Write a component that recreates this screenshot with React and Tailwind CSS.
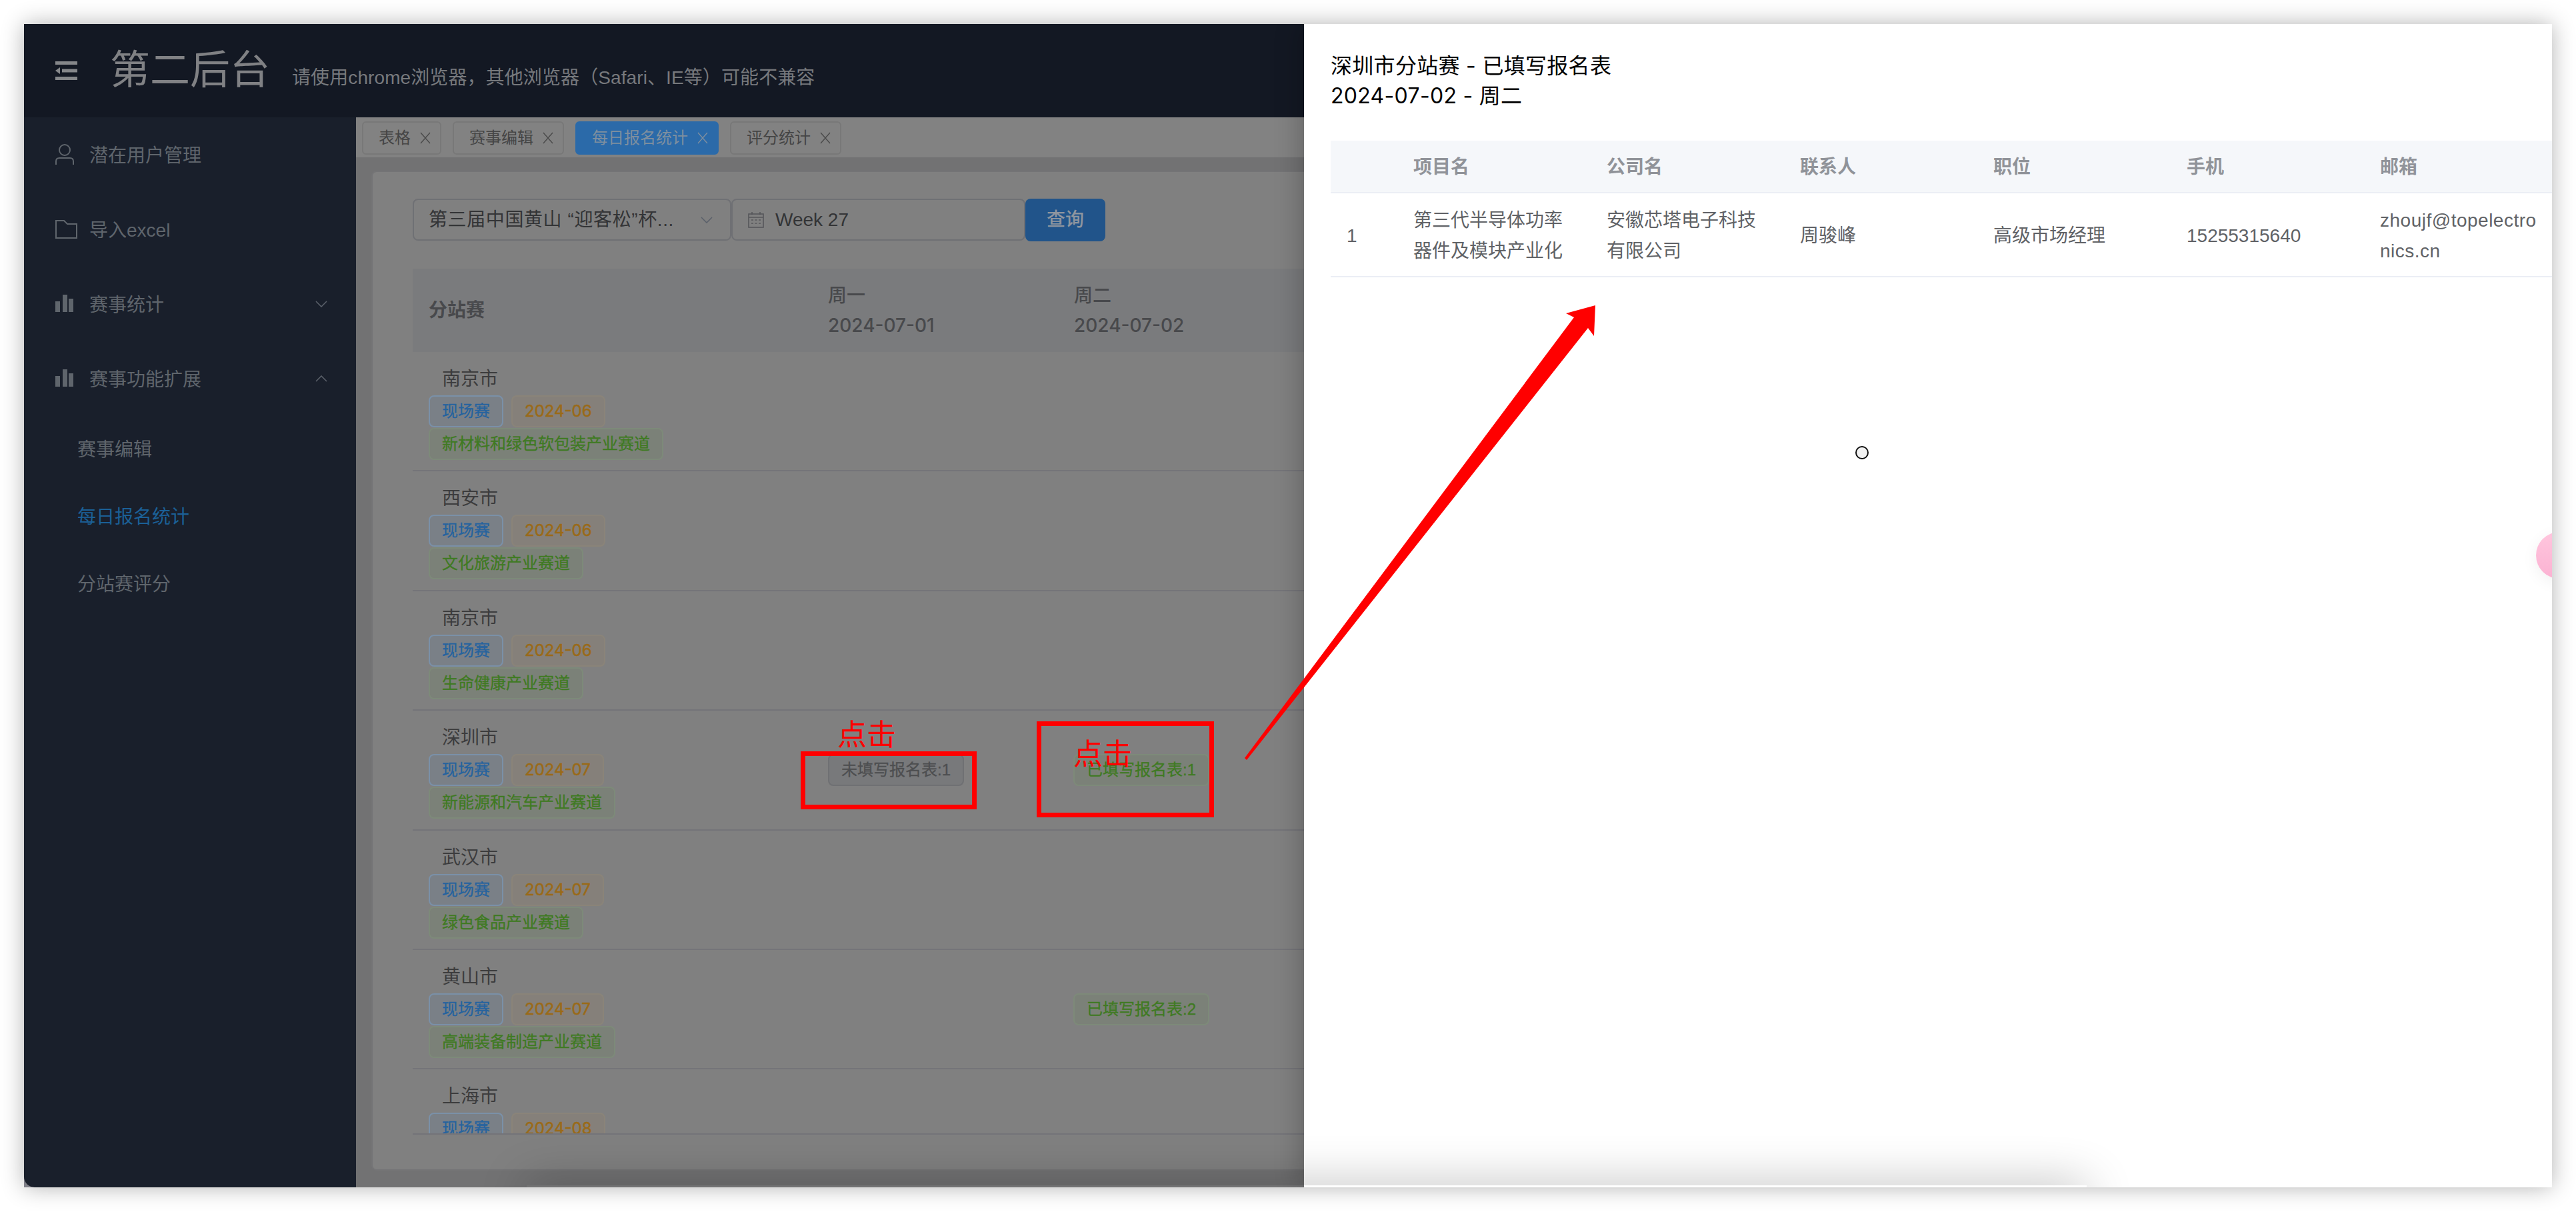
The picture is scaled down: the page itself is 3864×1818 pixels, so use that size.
const FONT = "[font-family:'Liberation_Sans','Noto_Sans_CJK_SC',sans-serif]";
const NUM = "[font-family:'Inter','Noto_Sans_CJK_SC',sans-serif]";

const Chevron = ({ up }) => (
  <svg width="18" height="10" viewBox="0 0 18 10" fill="none" stroke="#5a606a" strokeWidth="1.6" className="ml-auto">
    <path d={up ? "M1 9 L9 1 L17 9" : "M1 1 L9 9 L17 1"} />
  </svg>
);

const Bars = () => (
  <svg width="28" height="28" viewBox="0 0 28 28" fill="#5f656c">
    <rect x="0" y="10" width="7" height="16" />
    <rect x="11" y="0" width="7" height="26" />
    <rect x="20" y="6" width="7" height="20" />
  </svg>
);

const UserIcon = () => (
  <svg width="28" height="32" viewBox="0 0 28 32" fill="none" stroke="#5f656c" strokeWidth="2">
    <circle cx="14" cy="9" r="8" />
    <path d="M1 31 V26 Q1 21 6 21 H22 Q27 21 27 26 V31" />
  </svg>
);

const FolderIcon = () => (
  <svg width="33" height="28" viewBox="0 0 33 28" fill="none" stroke="#5f656c" strokeWidth="2">
    <path d="M1 1 H13 L18 6 H32 V27 H1 Z" />
  </svg>
);

const FoldIcon = () => (
  <svg width="33" height="28" viewBox="0 0 33 28" fill="#85878a">
    <rect x="0" y="0" width="33" height="5" />
    <rect x="10" y="11.5" width="23" height="5" />
    <rect x="0" y="23" width="33" height="5" />
    <path d="M0 14 L7 9 V19 Z" />
  </svg>
);

const CalendarIcon = () => (
  <svg width="24" height="24" viewBox="0 0 24 24" fill="none" stroke="#55565a" strokeWidth="1.6">
    <rect x="1" y="3" width="22" height="20" />
    <path d="M1 8 H23 M6 0 V4 M18 0 V4" />
    <path d="M5 12 H8 M10.5 12 H13.5 M16 12 H19 M5 17 H8 M10.5 17 H13.5 M16 17 H19" />
  </svg>
);

const Close = ({ color = "#4a4a4a" }) => (
  <svg width="16" height="18" viewBox="0 0 16 18" fill="none" stroke={color} strokeWidth="1.4">
    <path d="M1 1 L15 17 M15 1 L1 17" />
  </svg>
);

const Tag = ({ kind, children, num }) => {
  const styles = {
    blue: "bg-[#7a8087] border-[#7a90a8] text-[#25639f]",
    orange: "bg-[#85807a] border-[#8a8479] text-[#9a6a18]",
    green: "bg-[#7b8178] border-[#7d8a79] text-[#3f7a22]",
    gray: "bg-[#78797b] border-[#6f7073] text-[#4d4e50]",
  };
  return (
    <span className={`inline-flex items-center h-[48px] px-[18px] border-2 rounded-[8px] text-[24px] whitespace-nowrap ${num ? "[-webkit-text-stroke:0.5px]" : "[-webkit-text-stroke:0.3px]"} ${num ? NUM : ""} ${styles[kind]}`}>
      {children}
    </span>
  );
};

const rows = [
  { city: "南京市", date: "2024-06", track: "新材料和绿色软包装产业赛道" },
  { city: "西安市", date: "2024-06", track: "文化旅游产业赛道" },
  { city: "南京市", date: "2024-06", track: "生命健康产业赛道" },
  { city: "深圳市", date: "2024-07", track: "新能源和汽车产业赛道", mon: "未填写报名表:1", tue: "已填写报名表:1" },
  { city: "武汉市", date: "2024-07", track: "绿色食品产业赛道" },
  { city: "黄山市", date: "2024-07", track: "高端装备制造产业赛道", tue: "已填写报名表:2" },
  { city: "上海市", date: "2024-08", track: "" },
];

const Sidebar = () => (
  <aside className="w-[498px] shrink-0 bg-[#191f2b] rounded-bl-[16px] text-[28px] text-[#5f656c]">
    {[
      { icon: <UserIcon />, label: "潜在用户管理" },
      { icon: <FolderIcon />, label: "导入excel" },
      { icon: <Bars />, label: "赛事统计", chevron: <Chevron /> },
      { icon: <Bars />, label: "赛事功能扩展", chevron: <Chevron up /> },
    ].map((m) => (
      <div key={m.label} className="h-[112px] flex items-center pl-[47px] pr-[43px]">
        <span className="w-[51px] shrink-0 flex items-center">{m.icon}</span>
        <span className="pt-[3px]">{m.label}</span>
        {m.chevron}
      </div>
    ))}
    {[
      ["赛事编辑", ""],
      ["每日报名统计", "text-[#1b6097]"],
      ["分站赛评分", ""],
    ].map(([t, c]) => (
      <div key={t} className={`h-[101px] flex items-center pl-[80px] ${c}`}>{t}</div>
    ))}
  </aside>
);

const TabBar = () => (
  <div className="h-[60px] bg-[#828282] pl-[9px] pt-[6px] flex gap-[17px] text-[24px]">
    {[["表格", false], ["赛事编辑", false], ["每日报名统计", true], ["评分统计", false]].map(([t, active]) => (
      <div
        key={t}
        className={`h-[50px] flex items-center gap-[14px] pl-[23px] pr-[14px] border-2 rounded-[6px] ${
          active ? "bg-[#2b6aa9] border-[#2b6aa9] text-[#7f8f9f]" : "border-[#787878] text-[#454545]"
        }`}
      >
        <span>{t}</span>
        <Close color={active ? "#7f8f9f" : "#4a4a4a"} />
      </div>
    ))}
  </div>
);

const Filters = () => (
  <div className="flex h-[64px] text-[28px] text-[#333436]">
    <div className="w-[478px] h-[63px] flex items-center border-2 border-[#6f7074] rounded-[8px] pl-[22px] pr-[26px]">
      <span className="whitespace-nowrap tracking-[0.6px]">第三届中国黄山 “迎客松”杯...</span>
      <Chevron />
    </div>
    <div className="w-[441px] h-[63px] flex items-center border-2 border-[#6f7074] rounded-[8px] pl-[23px] gap-[17px]">
      <CalendarIcon />
      <span>Week 27</span>
    </div>
    <div className="w-[120px] h-[64px] flex items-center justify-center rounded-[8px] bg-[#21548a] text-[#8e959f] font-medium">
      查询
    </div>
  </div>
);

const MainTable = () => (
  <div className="mt-[41px]">
    <div className="h-[125px] bg-[#7a7b7d] flex items-center text-[28px] font-bold text-[#48494c]">
      <div className="w-[599px] pl-[24px]">分站赛</div>
      <div className={`w-[369px] pl-[24px] leading-[45px] font-medium ${NUM}`}>
        <div>周一</div>
        <div>2024-07-01</div>
      </div>
      <div className={`w-[369px] pl-[24px] leading-[45px] font-medium ${NUM}`}>
        <div>周二</div>
        <div>2024-07-02</div>
      </div>
    </div>
    <div className="h-[1174px] overflow-hidden border-b-2 border-[#747479]">
      {rows.map((r) => (
        <div key={r.city + r.track} className="h-[179.4px] shrink-0 flex border-b-2 border-[#747479]">
          <div className="w-[599px] pl-[24px] pt-[16px]">
            <div className="pl-[20px] pt-[2px] h-[46px] text-[28px] leading-[46px] text-[#3c3c3d]">{r.city}</div>
            <div className="mt-[3px] flex flex-wrap gap-x-[12px] gap-y-[1px]">
              <Tag kind="blue">现场赛</Tag>
              <Tag kind="orange" num>{r.date}</Tag>
              {r.track && <div className="w-full"><Tag kind="green">{r.track}</Tag></div>}
            </div>
          </div>
          <div className="w-[369px] pl-[24px] flex items-center">
            {r.mon && <Tag kind="gray">{r.mon}</Tag>}
          </div>
          <div className="w-[369px] pl-[23px] flex items-center">
            {r.tue && <Tag kind="green">{r.tue}</Tag>}
          </div>
        </div>
      ))}
    </div>
  </div>
);

const Main = () => (
  <main className="flex-1 min-w-0 flex flex-col bg-[#727273]">
    <TabBar />
    <div className="flex-1 pt-[20px] pl-[23px] pr-[23px] pb-[25px]">
      <div className="h-full bg-[#808080] border-2 border-[#747476] rounded-[8px] pl-[60px] pt-[40px] overflow-hidden">
        <Filters />
        <MainTable />
      </div>
    </div>
  </main>
);

const DETAIL_COLS = "grid grid-cols-[100px_290px_290px_290px_290px_290px_290px]";

const Drawer = () => (
  <section className="absolute top-0 bottom-0 right-0 w-[1872px] bg-white pl-[40px] pt-[40px] overflow-hidden shadow-[-6px_0_36px_rgba(0,0,0,0.22)] text-[28px]">
    <div className={`h-[90px] text-[32px] leading-[45px] tracking-[0.3px] text-black ${NUM}`}>
      <div>深圳市分站赛 - 已填写报名表</div>
      <div>2024-07-02 - 周二</div>
    </div>
    <div className="mt-[45px]">
      <div className={`${DETAIL_COLS} h-[79px] pt-[3px] items-center bg-[#f5f7fa] border-b-2 border-[#ebeef5] font-bold text-[#909399]`}>
        <div />
        {["项目名", "公司名", "联系人", "职位", "手机", "邮箱"].map((h) => (
          <div key={h} className="pl-[24px]">{h}</div>
        ))}
      </div>
      <div className={`${DETAIL_COLS} h-[126px] pt-[3px] items-center border-b-2 border-[#ebeef5] leading-[46px] text-[#606266]`}>
        <div className="pl-[24px]">1</div>
        <div className="pl-[24px] pr-[24px]">第三代半导体功率器件及模块产业化</div>
        <div className="pl-[24px] pr-[24px]">安徽芯塔电子科技有限公司</div>
        <div className="pl-[24px]">周骏峰</div>
        <div className="pl-[24px]">高级市场经理</div>
        <div className="pl-[24px]">15255315640</div>
        <div className="pl-[24px] whitespace-nowrap tracking-[0.5px]">zhoujf@topelectro<br />nics.cn</div>
      </div>
    </div>
    <div className="absolute left-[1848px] top-[762px] w-[70px] h-[70px] rounded-full bg-gradient-to-b from-[#ffc6de] to-[#fbb2d2] shadow-[0_6px_24px_rgba(0,0,0,0.06)]" />
  </section>
);

const Annotations = () => (
  <>
    <div className="absolute left-[1201px] top-[1127px] w-[264px] h-[87px] border-[7px] border-[#ff0000]" />
    <div className="absolute left-[1555px] top-[1082px] w-[266px] h-[144px] border-[7px] border-[#ff0000]" />
    <span className="absolute left-[1256px] top-[1075px] text-[44px] leading-[56px] text-[#ff0000]">点击</span>
    <span className="absolute left-[1610px] top-[1104px] text-[44px] leading-[56px] text-[#ff0000]">点击</span>
    <svg className="absolute left-0 top-0" width="3864" height="1818" fill="none">
      <polygon points="1867,1137 2361,476 2349,470 2393,458 2391,504 2382,492 1870,1140" fill="#ff0000" />
      <circle cx="2793" cy="679" r="9" fill="#f2f2f2" stroke="#111111" strokeWidth="2" />
    </svg>
  </>
);

export default function App() {
  return (
    <div className={`relative w-[3864px] h-[1818px] overflow-hidden bg-white pt-[36px] pl-[36px] ${FONT}`}>
      <div className="relative w-[3792px] h-[1745px] bg-[#7f7f88] shadow-[0_0_32px_rgba(0,0,0,0.3)] overflow-hidden flex flex-col">
        <header className="h-[140px] shrink-0 bg-[#131823] flex items-center pl-[47px]">
          <FoldIcon />
          <div className="ml-[49px] flex items-baseline">
            <span className="text-[60px] text-[#808184]">第二后台</span>
            <span className="ml-[33px] text-[28px] tracking-[0.1px] text-[#77797d]">请使用chrome浏览器，其他浏览器（Safari、IE等）可能不兼容</span>
          </div>
        </header>
        <div className="flex-1 min-h-0 flex">
          <Sidebar />
          <Main />
        </div>
        <Drawer />
        <div className="absolute left-[754px] top-[1742px] w-[2340px] h-[40px] shadow-[0_0_70px_rgba(0,0,0,0.3)]" />
      </div>
      <Annotations />
    </div>
  );
}
